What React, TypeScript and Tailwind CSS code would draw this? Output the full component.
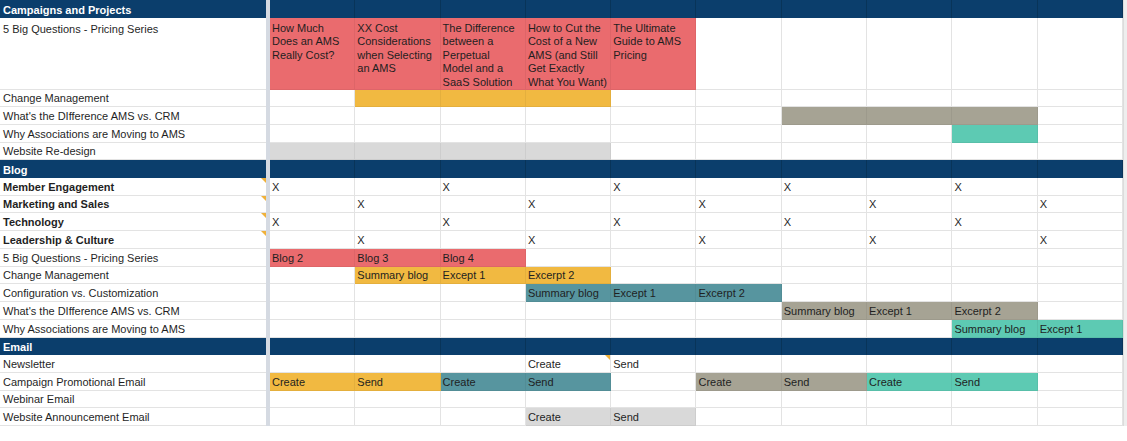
import type { ReactNode } from 'react';

type Fill = 'R' | 'Y' | 'T' | 'G' | 'M' | 'L';
type Cell = { fill?: Fill; text?: string; note?: boolean };
type Row = {
  label: string;
  kind?: 'header' | 'tall';
  bold?: boolean;
  note?: boolean;
  cells?: Record<number, Cell>;
};

const FILLS: Record<Fill, string> = {
  R: 'bg-[#ea6b6e] border-r-black/5 border-b-black/5',
  Y: 'bg-[#f1b941] border-r-black/5 border-b-black/5',
  T: 'bg-[#57959f] border-r-black/5 border-b-black/5',
  G: 'bg-[#a6a394] border-r-black/5 border-b-black/5',
  M: 'bg-[#5dcab3] border-r-black/5 border-b-black/5',
  L: 'bg-[#d9d9d9] border-r-black/5 border-b-black/5',
};

const x = (cols: number[]) =>
  Object.fromEntries(cols.map((c) => [c, { text: 'X' }])) as Record<number, Cell>;

// wrapped titles keep the sheet's own line breaks
const ROWS: Row[] = [
  { label: 'Campaigns and Projects', kind: 'header' },
  {
    label: '5 Big Questions - Pricing Series',
    kind: 'tall',
    cells: {
      0: { fill: 'R', text: 'How Much\nDoes an AMS\nReally Cost?' },
      1: { fill: 'R', text: 'XX Cost\nConsiderations\nwhen Selecting\nan AMS' },
      2: { fill: 'R', text: 'The Difference\nbetween a\nPerpetual\nModel and a\nSaaS Solution' },
      3: { fill: 'R', text: 'How to Cut the\nCost of a New\nAMS (and Still\nGet Exactly\nWhat You Want)' },
      4: { fill: 'R', text: 'The Ultimate\nGuide to AMS\nPricing' },
    },
  },
  { label: 'Change Management', cells: { 1: { fill: 'Y' }, 2: { fill: 'Y' }, 3: { fill: 'Y' } } },
  { label: "What's the DIfference AMS vs. CRM", cells: { 6: { fill: 'G' }, 7: { fill: 'G' }, 8: { fill: 'G' } } },
  { label: 'Why Associations are Moving to AMS', cells: { 8: { fill: 'M' } } },
  { label: 'Website Re-design', cells: { 0: { fill: 'L' }, 1: { fill: 'L' }, 2: { fill: 'L' }, 3: { fill: 'L' } } },
  { label: 'Blog', kind: 'header' },
  { label: 'Member Engagement', bold: true, note: true, cells: x([0, 2, 4, 6, 8]) },
  { label: 'Marketing and Sales', bold: true, note: true, cells: x([1, 3, 5, 7, 9]) },
  { label: 'Technology', bold: true, note: true, cells: x([0, 2, 4, 6, 8]) },
  { label: 'Leadership & Culture', bold: true, note: true, cells: x([1, 3, 5, 7, 9]) },
  {
    label: '5 Big Questions - Pricing Series',
    cells: { 0: { fill: 'R', text: 'Blog 2' }, 1: { fill: 'R', text: 'Blog 3' }, 2: { fill: 'R', text: 'Blog 4' } },
  },
  {
    label: 'Change Management',
    cells: { 1: { fill: 'Y', text: 'Summary blog' }, 2: { fill: 'Y', text: 'Except 1' }, 3: { fill: 'Y', text: 'Excerpt 2' } },
  },
  {
    label: 'Configuration vs. Customization',
    cells: { 3: { fill: 'T', text: 'Summary blog' }, 4: { fill: 'T', text: 'Except 1' }, 5: { fill: 'T', text: 'Excerpt 2' } },
  },
  {
    label: "What's the DIfference AMS vs. CRM",
    cells: { 6: { fill: 'G', text: 'Summary blog' }, 7: { fill: 'G', text: 'Except 1' }, 8: { fill: 'G', text: 'Excerpt 2' } },
  },
  {
    label: 'Why Associations are Moving to AMS',
    cells: { 8: { fill: 'M', text: 'Summary blog' }, 9: { fill: 'M', text: 'Except 1' } },
  },
  { label: 'Email', kind: 'header' },
  { label: 'Newsletter', cells: { 3: { text: 'Create', note: true }, 4: { text: 'Send' } } },
  {
    label: 'Campaign Promotional Email',
    cells: {
      0: { fill: 'Y', text: 'Create' },
      1: { fill: 'Y', text: 'Send' },
      2: { fill: 'T', text: 'Create' },
      3: { fill: 'T', text: 'Send' },
      5: { fill: 'G', text: 'Create' },
      6: { fill: 'G', text: 'Send' },
      7: { fill: 'M', text: 'Create' },
      8: { fill: 'M', text: 'Send' },
    },
  },
  { label: 'Webinar Email' },
  { label: 'Website Announcement Email', cells: { 3: { fill: 'L', text: 'Create' }, 4: { fill: 'L', text: 'Send' } } },
];

function NoteMark() {
  return (
    <span className="absolute top-0 right-0 w-0 h-0 border-l-[5px] border-l-transparent border-t-[5px] border-t-[#f0b13a]" />
  );
}

function SheetRow({ row }: { row: Row }) {
  const header = row.kind === 'header';
  const tall = row.kind === 'tall';
  const height = header ? 'h-[17.5px]' : tall ? 'h-[72px]' : 'h-[17.74px]';
  const align = tall ? 'items-start pt-[4px]' : 'items-end pb-[1px]';

  const cells: ReactNode[] = [];
  for (let i = 0; i < 10; i++) {
    const c = row.cells?.[i];
    const base = header
      ? 'bg-[#0b3e6c] border-r border-r-[#083459]'
      : c?.fill
        ? `border-r border-b ${FILLS[c.fill]}`
        : 'bg-white border-r border-b border-[#e3e3e3]';
    cells.push(
      <div
        key={i}
        className={`relative w-[85.3px] shrink-0 flex ${align} pl-[2px] overflow-hidden whitespace-pre ${base} ${
          tall ? 'leading-[13.6px]' : 'leading-[14px]'
        }`}
      >
        {c?.text}
        {c?.note && <NoteMark />}
      </div>,
    );
  }

  return (
    <div className={`flex ${height}`}>
      <div
        className={`relative w-[266px] shrink-0 flex ${align} px-[3px] leading-[14px] ${
          header
            ? 'bg-[#0b3e6c] text-white font-bold'
            : `bg-white border-b border-[#e3e3e3] ${row.bold ? 'font-bold' : ''}`
        }`}
      >
        {row.label}
        {row.note && <NoteMark />}
      </div>
      <div className="w-[4px] shrink-0 bg-[#d5dae2]" />
      {cells}
      <div className="flex-1 bg-[#eeeeee] border-l border-[#dcdcdc]" />
    </div>
  );
}

export default function App() {
  return (
    <div
      className="w-[1127px] h-[441px] bg-white text-[11px] text-[#1f1f1f] overflow-hidden"
      style={{ fontFamily: '"Liberation Sans", Arial, sans-serif' }}
    >
      {ROWS.map((r, i) => (
        <SheetRow key={i} row={r} />
      ))}
    </div>
  );
}
